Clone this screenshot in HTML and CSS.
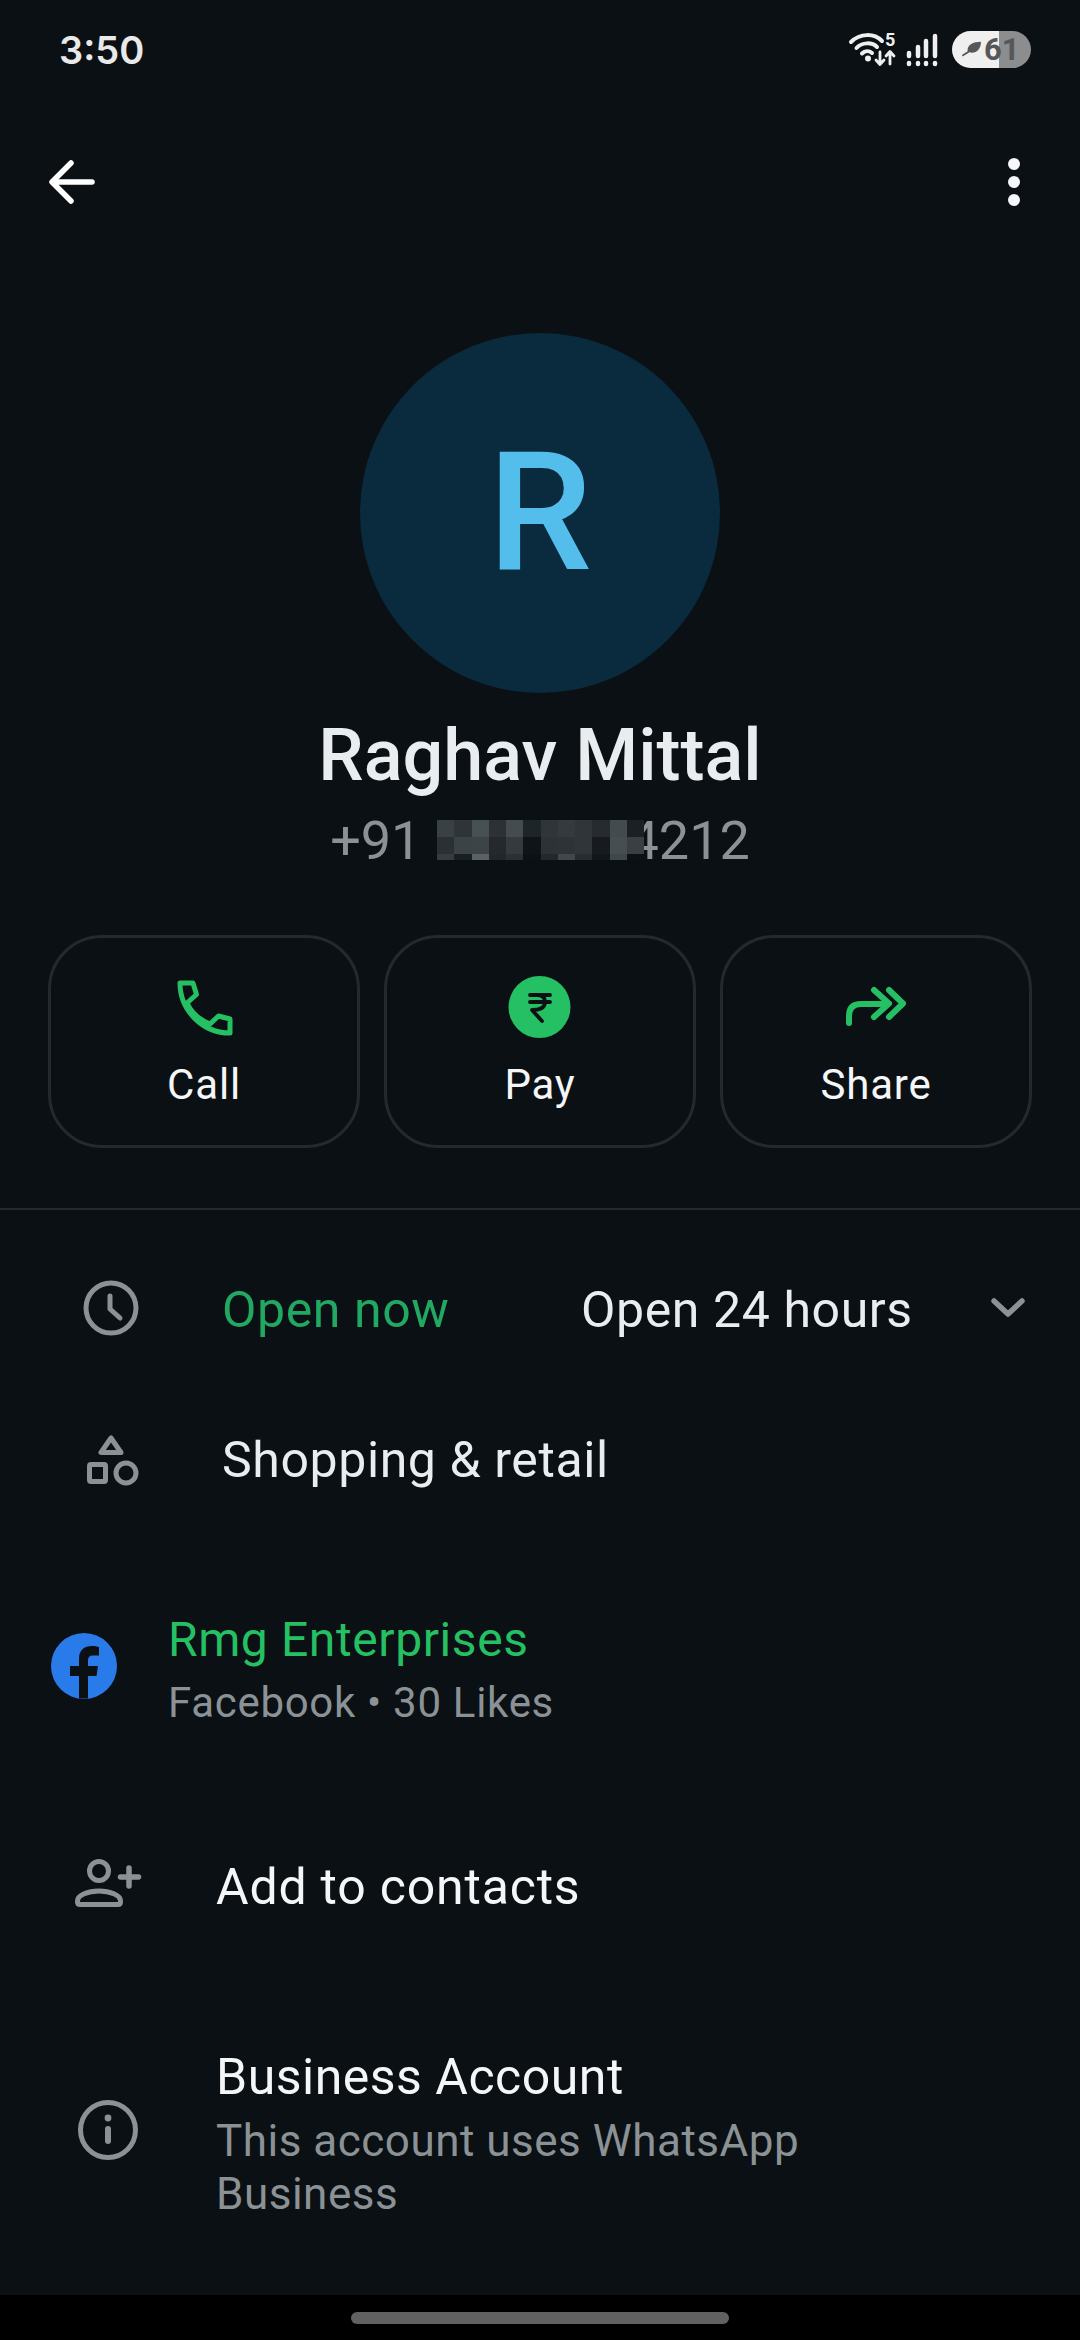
FILE: index.html
```html
<!DOCTYPE html>
<html lang="en">
<head>
<meta charset="utf-8">
<title>Raghav Mittal</title>
<link rel="stylesheet" href="styles.css">
</head>
<body>
<div class="screen">
  <main class="main">
    <div class="status">
      <span class="time">3:50</span>
      <div class="status-right">
        <svg class="status-icons" width="50" height="40" viewBox="0 0 50 40">
          <g fill="none" stroke="#efefef" stroke-width="4" stroke-linecap="round">
            <path d="M5 12 C14 3 28 3 36 11"/>
            <path d="M10.500 18 C16 12 26 12 31 17"/>
            <path d="M16 23.500 C19 20.500 23 20.500 26 23"/>
          </g>
          <circle cx="22" cy="28.500" r="3" fill="#efefef"/>
          <g fill="none" stroke="#efefef" stroke-width="2.800" stroke-linecap="round" stroke-linejoin="round">
            <path d="M34 22 V34 M30 30 L34 34.500 L38 30"/>
            <path d="M44 34 V22 M40 26 L44 21.500 L48 26"/>
          </g>
          <text class="wifi-five" x="39" y="16">5</text>
        </svg>
        <svg class="signal" width="36" height="40" viewBox="0 0 36 40">
          <g fill="none" stroke="#efefef" stroke-width="4.500" stroke-linecap="round">
            <path d="M4 23 V26 M13 17 V26 M21 11 V26 M30 6 V26"/>
            <path d="M4 33 V34 M13 33 V34 M21 33 V34 M30 33 V34"/>
          </g>
        </svg>
        <div class="battery">
          <svg class="leaf" width="20" height="18" viewBox="0 0 22 20">
            <path d="M6 12 C6 5 12 2 21 2 C21 10 16 15 9 14 Z" fill="#555759"/>
            <path d="M1 17 C5 15 9 12 13 8" fill="none" stroke="#555759" stroke-width="2" stroke-linecap="round"/>
          </svg>
          <span class="battery-level">61</span>
        </div>
      </div>
    </div>

    <div class="toolbar">
      <svg class="back" width="50" height="50" viewBox="0 0 50 50">
        <path d="M45 25 H6 M24 6 L5 25 L24 44" fill="none" stroke="#fff" stroke-width="5.500" stroke-linecap="round" stroke-linejoin="round"/>
      </svg>
      <svg class="more" width="14" height="50" viewBox="0 0 14 50">
        <circle cx="7" cy="7" r="6" fill="#f5f7fa"/>
        <circle cx="7" cy="25" r="6" fill="#f5f7fa"/>
        <circle cx="7" cy="43" r="6" fill="#f5f7fa"/>
      </svg>
    </div>

    <section class="profile">
      <div class="avatar">R</div>
      <h1 class="name">Raghav Mittal</h1>
      <div class="phone">
        <span class="cc">+91</span>
        <svg class="mosaic" width="207" height="40" viewBox="0 0 12 2.320" preserveAspectRatio="none" shape-rendering="crispEdges">
          <g>
            <rect x="0" y="0" width="1" height="1" fill="#3a4145"/><rect x="1" y="0" width="1" height="1" fill="#2e3438"/><rect x="2" y="0" width="1" height="1" fill="#475055"/><rect x="3" y="0" width="1" height="1" fill="#2c3135"/><rect x="4" y="0" width="1" height="1" fill="#454c50"/><rect x="5" y="0" width="1" height="1" fill="#1e2529"/><rect x="6" y="0" width="1" height="1" fill="#2f3539"/><rect x="7" y="0" width="1" height="1" fill="#343a3e"/><rect x="8" y="0" width="1" height="1" fill="#2f3539"/><rect x="9" y="0" width="1" height="1" fill="#262b2f"/><rect x="10" y="0" width="1" height="1" fill="#444b4f"/><rect x="11" y="0" width="1" height="1" fill="#1b2024"/>
            <rect x="0" y="1" width="1" height="1" fill="#2a3034"/><rect x="1" y="1" width="1" height="1" fill="#3c4347"/><rect x="2" y="1" width="1" height="1" fill="#3d4448"/><rect x="3" y="1" width="1" height="1" fill="#25292e"/><rect x="4" y="1" width="1" height="1" fill="#343a3e"/><rect x="5" y="1" width="1" height="1" fill="#0f1418"/><rect x="6" y="1" width="1" height="1" fill="#2c3236"/><rect x="7" y="1" width="1" height="1" fill="#2d3337"/><rect x="8" y="1" width="1" height="1" fill="#2f3539"/><rect x="9" y="1" width="1" height="1" fill="#171b1f"/><rect x="10" y="1" width="1" height="1" fill="#474e52"/><rect x="11" y="1" width="1" height="1" fill="#393f43"/>
            <rect x="0" y="2" width="1" height="0.320" fill="#363c40"/><rect x="1" y="2" width="1" height="0.320" fill="#1a1f23"/><rect x="2" y="2" width="1" height="0.320" fill="#5a6266"/><rect x="3" y="2" width="1" height="0.320" fill="#22272b"/><rect x="4" y="2" width="1" height="0.320" fill="#2b3034"/><rect x="5" y="2" width="1" height="0.320" fill="#0c1115"/><rect x="6" y="2" width="1" height="0.320" fill="#23282c"/><rect x="7" y="2" width="1" height="0.320" fill="#41484c"/><rect x="8" y="2" width="1" height="0.320" fill="#272c30"/><rect x="9" y="2" width="1" height="0.320" fill="#12171b"/><rect x="10" y="2" width="1" height="0.320" fill="#40474b"/><rect x="11" y="2" width="1" height="0.320" fill="#0c1115"/>
          </g>
        </svg>
        <span class="tail">4212</span>
      </div>
    </section>

    <div class="actions">
      <div class="action">
        <svg class="action-icon" width="60" height="60" viewBox="0 0 60 60">
          <path transform="translate(3 3)" d="M3 3 H16 L19.500 14.500 L10 23 C14 32 23 40 33 44 L41.500 36 L53 39 V53 C25 53 3 30 3 3 Z" fill="none" stroke="#25c063" stroke-width="5" stroke-linejoin="round"/>
        </svg>
        <span class="action-label">Call</span>
      </div>
      <div class="action">
        <svg class="action-icon" width="60" height="60" viewBox="0 0 60 60">
          <circle cx="29.500" cy="30" r="31" fill="#25c063"/>
          <path d="M20 18 H40 M20 25 H40 M27 18 C33 18 35 21 35 25 C35 30 31 33 22 33 L32 44" fill="none" stroke="#0b1014" stroke-width="3.800" stroke-linecap="round" stroke-linejoin="round"/>
        </svg>
        <span class="action-label">Pay</span>
      </div>
      <div class="action">
        <svg class="action-icon" width="60" height="60" viewBox="0 0 60 60">
          <path d="M3 46 V39 Q3 27 15 27 H42 M28 13 L43 26.500 L28 40 M43 13 L57 26.500 L43 40" fill="none" stroke="#25c063" stroke-width="6" stroke-linecap="round" stroke-linejoin="round"/>
        </svg>
        <span class="action-label">Share</span>
      </div>
    </div>

    <div class="divider"></div>

    <div class="row row-info">
      <div class="col-222">
        <svg class="row-icon" width="60" height="60" viewBox="0 0 60 60">
          <circle cx="31" cy="30" r="25" fill="none" stroke="#8b9296" stroke-width="5"/>
          <path d="M30 18 V31 L40 40" fill="none" stroke="#8b9296" stroke-width="5" stroke-linecap="round" stroke-linejoin="round"/>
        </svg>
      </div>
      <span class="open-now">Open now</span>
      <span class="hours">Open 24 hours</span>
      <svg class="chev" width="34" height="20" viewBox="0 0 34 20">
        <path d="M3 3 L17 16 L31 3" fill="none" stroke="#8b9296" stroke-width="5.500" stroke-linecap="round" stroke-linejoin="round"/>
      </svg>
    </div>

    <div class="row row-info">
      <div class="col-222">
        <svg class="row-icon" width="60" height="60" viewBox="0 0 60 60">
          <path d="M31 10 L21 24.500 H41 Z" fill="none" stroke="#8b9296" stroke-width="5" stroke-linejoin="round"/>
          <rect x="9.500" y="36.500" width="16" height="17" rx="1.500" fill="none" stroke="#8b9296" stroke-width="5"/>
          <circle cx="46" cy="45" r="10" fill="none" stroke="#8b9296" stroke-width="5"/>
        </svg>
      </div>
      <span class="row-title">Shopping &amp; retail</span>
    </div>

    <div class="row row-fb">
      <div class="col-169">
        <svg class="fb-icon" width="68" height="68" viewBox="0 0 68 68">
          <circle cx="34" cy="34" r="33" fill="#2a7bea"/>
          <path d="M29 66.500 V44 H20 V34 H29 V27 C29 18 34 14 42 14 C45 14 47 14.500 49 15 V23.500 H44 C40 23 38 25 38 28 V34 H48 L46.500 44 H38 V66.500 Z" fill="#0b1014"/>
        </svg>
      </div>
      <div class="fb-text">
        <div class="fb-title">Rmg Enterprises</div>
        <div class="fb-sub">Facebook • 30 Likes</div>
      </div>
    </div>

    <div class="row row-add">
      <div class="col-217">
        <svg class="add-icon" width="76" height="60" viewBox="0 0 76 60">
          <circle cx="29" cy="16" r="9.500" fill="none" stroke="#8b9296" stroke-width="5"/>
          <path d="M7.500 46 C7.500 40 18 36 29 36 C40 36 50.500 40 50.500 46 V47 Q50.500 49.500 48 49.500 H10 Q7.500 49.500 7.500 47 Z" fill="none" stroke="#8b9296" stroke-width="5" stroke-linejoin="round"/>
          <path d="M50.500 22 H68.500 M59 13 V31" fill="none" stroke="#8b9296" stroke-width="5.500" stroke-linecap="round"/>
        </svg>
      </div>
      <span class="row-title row-title-add">Add to contacts</span>
    </div>

    <div class="row row-biz">
      <div class="col-217">
        <svg class="info-icon" width="60" height="60" viewBox="0 0 60 60">
          <circle cx="30" cy="30" r="27.500" fill="none" stroke="#8b9296" stroke-width="5"/>
          <circle cx="30" cy="18" r="3.400" fill="#8b9296"/>
          <path d="M30 29 V41" fill="none" stroke="#8b9296" stroke-width="6" stroke-linecap="round"/>
        </svg>
      </div>
      <div class="biz-text">
        <div class="biz-title">Business Account</div>
        <div class="biz-sub">This account uses WhatsApp Business</div>
      </div>
    </div>
  </main>
  <footer class="navbar"><div class="handle"></div></footer>
</div>
</body>
</html>
```

FILE: styles.css
```css
* { box-sizing: border-box; margin: 0; padding: 0; }
html, body { background: #000; }
body { width: 1080px; height: 2340px; overflow: hidden; font-family: Roboto, "Noto Sans", sans-serif; }
svg { display: block; overflow: visible; flex: none; }

.screen { width: 1080px; height: 2340px; display: flex; flex-direction: column; }
.main { height: 2295px; background: #0b1014; overflow: hidden; }
.navbar { height: 45px; background: #000; display: flex; justify-content: center; padding-top: 17px; }
.handle { width: 378px; height: 12px; border-radius: 6px; background: #616161; }

.status { height: 100px; display: flex; justify-content: space-between; align-items: flex-start; padding: 30px 49px 0 59px; }
.time { font-family: Inter, Roboto, sans-serif; font-size: 38px; font-weight: 600; line-height: 40px; color: #e9e9e9; }
.status-right { display: flex; align-items: center; }
.wifi-five { font-family: Roboto, sans-serif; font-size: 18px; font-weight: 700; fill: #efefef; }
.signal { margin-left: 9px; }
.battery { width: 79px; height: 37px; margin-left: 11px; margin-top: -2px; border-radius: 19px; display: flex; align-items: center; padding-left: 10px; background: linear-gradient(90deg, #efefef 0, #efefef 47px, #8b8d8f 47px, #8b8d8f 100%); }
.leaf { margin-right: 2px; }
.battery-level { font-family: Roboto, sans-serif; font-size: 31px; font-weight: 700; line-height: 37px; color: #555759; }

.toolbar { height: 132px; display: flex; justify-content: space-between; align-items: center; padding: 32px 59px 0 47px; }

.profile { display: flex; flex-direction: column; align-items: center; }
.avatar { width: 360px; height: 360px; border-radius: 50%; background: #0a2a3d; color: #53bdeb; font-size: 166px; font-weight: 500; line-height: 360px; text-align: center; margin-top: 101px; }
.name { margin-top: 23px; height: 80px; font-size: 72px; line-height: 80px; font-weight: 500; color: #e9edef; }
.phone { margin-top: 14px; height: 60px; display: flex; align-items: center; font-size: 54px; line-height: 60px; color: #8b9296; }
.cc { margin-right: 16px; padding-top: 2px; }
.tail { padding-top: 2px; }
.mosaic { position: relative; z-index: 1; margin-right: -16px; }

.actions { display: flex; gap: 24px; padding: 0 48px; margin-top: 65px; }
.action { flex: 1 1 0; height: 213px; border: 3px solid #25292d; border-radius: 54px; display: flex; flex-direction: column; align-items: center; padding-top: 39px; background: #0b1014; }
.action-label { margin-top: 23px; font-size: 42px; line-height: 50px; letter-spacing: 0.8px; color: #f4f6f7; }

.divider { height: 2px; background: #25292d; margin-top: 60px; margin-bottom: 23px; }

.row { display: flex; align-items: center; }
.row-info { height: 150px; }
.row-fb { height: 266px; }
.row-add { height: 172px; }
.row-biz { margin-top: 70px; }
.col-222 { width: 222px; padding-left: 80px; flex: none; }
.col-169 { width: 168px; padding-left: 50px; flex: none; }
.col-217 { width: 216px; flex: none; }
.add-icon { margin-left: 70px; }
.info-icon { margin-left: 78px; margin-bottom: 2px; }

.open-now { width: 359px; font-size: 50px; line-height: 60px; letter-spacing: 0.6px; color: #21a862; padding-top: 3px; }
.hours, .row-title { font-size: 50px; line-height: 60px; letter-spacing: 0.6px; color: #e9edef; padding-top: 3px; }
.row-title-add { color: #f4f6f7; letter-spacing: 0.8px; }
.chev { margin-left: auto; margin-right: 55px; }

.fb-text { margin-top: 11px; }
.fb-title { font-size: 48px; line-height: 60px; letter-spacing: 0.6px; color: #25c063; }
.fb-sub { font-size: 42px; line-height: 60px; letter-spacing: 0.7px; color: #8b9296; margin-top: 3px; }

.biz-text { width: 620px; margin-top: 6px; }
.biz-title { font-size: 50px; line-height: 60px; letter-spacing: 0.5px; color: #f4f6f7; margin-bottom: 8px; }
.biz-sub { font-size: 44px; line-height: 53px; letter-spacing: 0.5px; color: #8b9296; }
```
